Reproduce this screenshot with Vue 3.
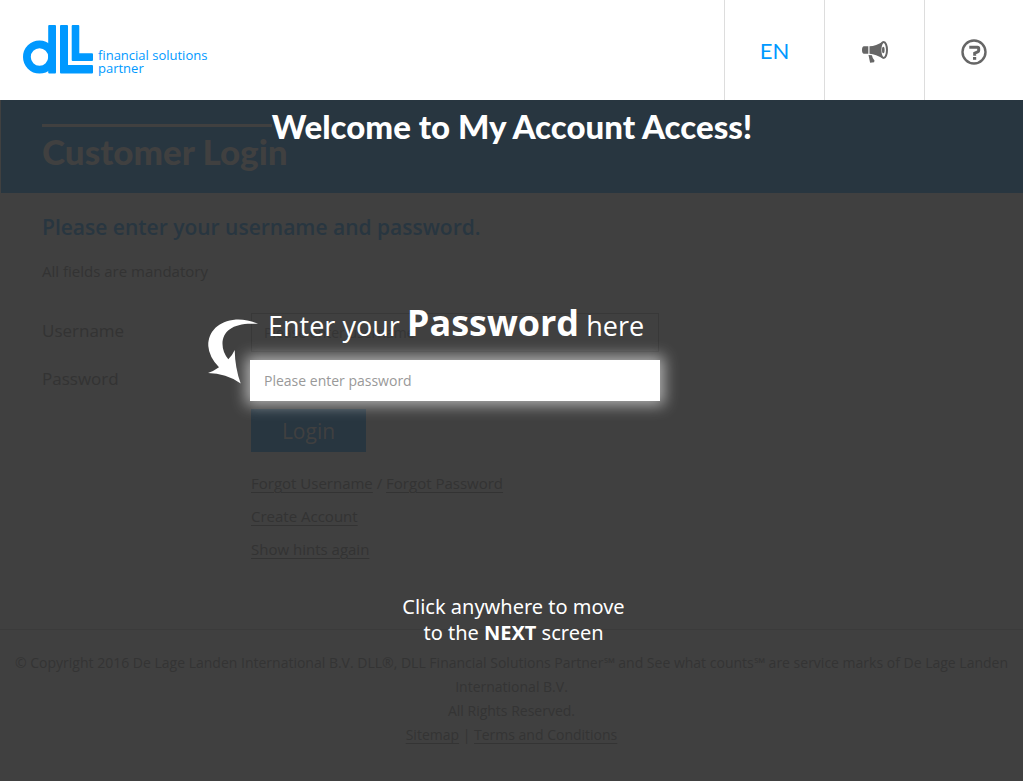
<script setup>
import { ref } from 'vue'

const username = ref('')
const password = ref('')
</script>

<template>
  <div class="page">
    <header class="topbar">
      <a class="logo" href="#" aria-label="DLL financial solutions partner">
        <svg width="70" height="49" viewBox="0 0 70 49" aria-hidden="true">
          <circle cx="16.5" cy="32" r="12.6" fill="none" stroke="#0099ff" stroke-width="7.8" />
          <rect x="25.2" y="0" width="7.8" height="48.5" rx="1" fill="#0099ff" />
          <path d="M38 0h6q1 0 1 1v39h24q1 0 1 1v6.5q0 1-1 1H38q-1 0-1-1V1q0-1 1-1z" fill="#0099ff" />
          <path d="M49.700 0h5.600q1 0 1 1v27.200h12.700q1 0 1 1v5.800q0 1-1 1H49.700q-1 0-1-1V1q0-1 1-1z" fill="#0099ff" />
        </svg>
        <span class="logo-text">financial solutions<br />partner</span>
      </a>
      <nav class="tools">
        <button class="tool lang" type="button">EN</button>
        <button class="tool" type="button" aria-label="Announcements">
          <svg width="26" height="22" viewBox="0 0 26 22" aria-hidden="true">
            <path d="M2 5.300h4.300v7.400H2Q0 12.500 0 9t2-3.700z" fill="#666" />
            <path d="M7.500 5.300Q14 5 21 0.500v17Q14 13.200 7.500 12.700z" fill="#666" />
            <ellipse cx="21.700" cy="9" rx="3.300" ry="8" fill="#fff" stroke="#666" stroke-width="2" />
            <ellipse cx="21.300" cy="9" rx="1.300" ry="3.200" fill="#666" />
            <path d="M6.500 14l3.400 .3q.4 2.700 2.600 5.200l-.4 1.800-4 .5z" fill="#666" />
          </svg>
        </button>
        <button class="tool" type="button" aria-label="Help">
          <svg width="26" height="26" viewBox="0 0 26 26" aria-hidden="true">
            <circle cx="13" cy="13" r="11.500" fill="none" stroke="#666" stroke-width="2.400" />
            <path d="M8.300 8.300h8.200q1.200 0 1.200 1.200v2q0 1-1 1.400l-3 1.300v2.600" fill="none" stroke="#666" stroke-width="3" />
            <rect x="12" y="18" width="3.200" height="2.800" fill="#666" />
          </svg>
        </button>
      </nav>
    </header>

    <section class="banner">
      <h1>Customer Login</h1>
      <p class="welcome">Welcome to My Account Access!</p>
    </section>

    <main>
      <h2>Please enter your username and password.</h2>
      <p class="note">All fields are mandatory</p>
      <form @submit.prevent>
        <label for="username">Username</label>
        <input id="username" v-model="username" type="text" placeholder="Please enter username" />
        <label for="password">Password</label>
        <div class="spotlight">
          <svg class="arrow" width="51" height="66" viewBox="0 0 51 66" aria-hidden="true">
            <path d="M50 5Q40 0 28 .5C10 2 0 13 .3 27Q1 38 11 48.300Q6 52 0 54Q18 54 32.700 64.500Q27 49 26.700 31Q24 37 20.300 40.300Q14.500 33 14.500 25C14.500 11 27 3 50 5z" fill="#fff" />
          </svg>
          <p class="hint">Enter your <strong>Password</strong> here</p>
          <input id="password" v-model="password" type="password" placeholder="Please enter password" />
        </div>
        <div class="actions">
          <button class="login" type="submit">Login</button>
          <p><a href="#">Forgot Username</a> / <a href="#">Forgot Password</a></p>
          <p><a href="#">Create Account</a></p>
          <p><a href="#">Show hints again</a></p>
        </div>
      </form>
    </main>

    <footer>
      <p class="next">Click anywhere to move<br />to the <strong>NEXT</strong> screen</p>
      <p>© Copyright 2016 De Lage Landen International B.V. DLL®, DLL Financial Solutions Partner℠ and See what counts℠ are service marks of De Lage Landen International B.V.</p>
      <p>All Rights Reserved.</p>
      <p><a href="#">Sitemap</a> | <a href="#">Terms and Conditions</a></p>
    </footer>
  </div>
</template>

<style>
body {
  margin: 0;
  background: #404040;
}
</style>

<style scoped>
* {
  box-sizing: border-box;
}
.page {
  display: flex;
  flex-direction: column;
  min-height: 100vh;
  background: #404040;
  color: #333;
  font-family: "Open Sans", "Noto Sans", sans-serif;
}
h1,
h2,
p {
  margin: 0;
}
button,
input {
  font-family: inherit;
}
.topbar {
  display: flex;
  justify-content: space-between;
  height: 100px;
  background: #fff;
}
.logo {
  display: flex;
  gap: 5px;
  padding: 25px 0 0 23px;
  color: #0099ff;
  text-decoration: none;
}
.logo-text {
  padding-top: 24px;
  font-size: 13px;
  line-height: 13px;
}
.tools {
  display: flex;
}
.tool {
  display: flex;
  align-items: center;
  justify-content: center;
  width: 100px;
  padding: 4px 0 0;
  border: 0;
  border-left: 1px solid #ddd;
  background: none;
}
.tool:last-child {
  width: 99px;
}
.lang {
  padding-top: 0;
  color: #0099ff;
  font-family: Lato, sans-serif;
  font-size: 22px;
}
.banner {
  position: relative;
  height: 93px;
  margin-left: 1px;
  padding: 24px 41px 0;
  background: #283640;
}
h1 {
  color: #404040;
  font-family: Lato, sans-serif;
  font-size: 35px;
  font-weight: 900;
  line-height: 48px;
}
h1::before {
  display: block;
  width: 230px;
  height: 3px;
  background: #404040;
  content: "";
}
.welcome {
  position: absolute;
  top: 6px;
  right: 0;
  left: 0;
  color: #fff;
  font-family: Lato, sans-serif;
  font-size: 33px;
  font-weight: 900;
  line-height: 40px;
  text-align: center;
}
main {
  padding: 18px 42px 63px;
}
h2 {
  color: #283640;
  font-size: 21px;
  font-weight: 600;
  line-height: 32px;
}
.note {
  margin-top: 16px;
  font-size: 15px;
  line-height: 24px;
}
form {
  display: grid;
  grid-template-columns: 209px minmax(0, 408px);
  row-gap: 9px;
  margin-top: 30px;
}
label {
  font-size: 17px;
  line-height: 36px;
}
input {
  display: block;
  width: 100%;
  height: 39px;
  padding: 0 12px;
  border: 1px solid #383838;
  border-radius: 0;
  outline: 0;
  background: #404040;
  color: #333;
  font-size: 14px;
}
input::placeholder {
  color: #353535;
  opacity: 1;
}
.spotlight {
  position: relative;
}
.spotlight input {
  border-color: #fff;
  background: #fff;
  box-shadow: 0 0 0 1px #fff, 0 0 14px 5px rgba(255, 255, 255, 0.6);
}
.spotlight input::placeholder {
  color: #999;
}
.arrow {
  position: absolute;
  top: -42px;
  left: -43px;
}
.hint {
  position: absolute;
  bottom: 50px;
  left: 17px;
  color: #fff;
  font-size: 27px;
  line-height: 48px;
  white-space: nowrap;
}
.hint strong {
  font-size: 36px;
}
.actions {
  grid-column: 2;
}
.login {
  width: 115px;
  height: 43px;
  margin-bottom: 15px;
  border: 0;
  background: #283640;
  color: #404040;
  font-size: 21px;
}
.actions p {
  font-size: 15px;
  line-height: 33px;
}
a {
  color: inherit;
}
.actions a,
footer a {
  text-underline-offset: 3px;
}
footer {
  position: relative;
  padding: 21px 12px 33px;
  border-top: 1px solid #3b3b3b;
  color: #343434;
  font-size: 14px;
  line-height: 24px;
  text-align: center;
}
.next {
  position: absolute;
  top: -36px;
  right: 0;
  left: 4px;
  color: #fff;
  font-family: "Noto Sans", sans-serif;
  font-size: 20px;
  line-height: 26px;
}
</style>
